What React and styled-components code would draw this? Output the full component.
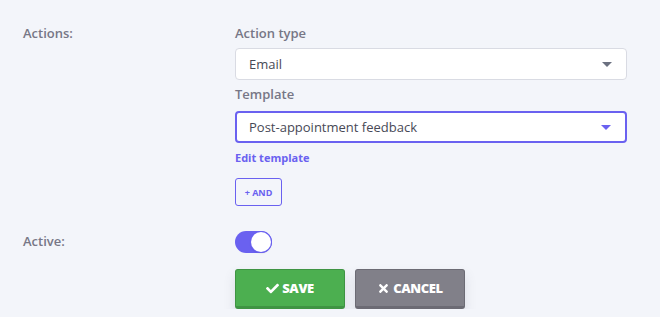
import React from "react";
import styled, { createGlobalStyle } from "styled-components";
import { FaCheck, FaTimes } from "react-icons/fa";

const GlobalStyle = createGlobalStyle`
  body {
    margin: 0;
    background: #f3f5fa;
    font-family: "Open Sans", "Noto Sans", sans-serif;
  }
`;

const Page = styled.div`
  display: grid;
  grid-template-columns: 212px 392px;
  padding: 24px 0 0 23px;
`;

const RowLabel = styled.div`
  font-size: 13px;
  font-weight: 600;
  color: #777786;
  line-height: 18px;
`;

const Fields = styled.div`
  display: flex;
  flex-direction: column;
  align-items: flex-start;
`;

const FieldLabel = styled.div`
  font-size: 13px;
  font-weight: 600;
  color: #777786;
  line-height: 18px;
  margin-bottom: ${(p) => p.$mb || 6}px;
`;

const Select = styled.div`
  box-sizing: border-box;
  width: 392px;
  height: 32px;
  display: flex;
  align-items: center;
  justify-content: space-between;
  padding: 0 14px 0 ${(p) => (p.$focused ? 12 : 13)}px;
  background: #fff;
  border: ${(p) => (p.$focused ? "2px solid #6a61f0" : "1px solid #d9dbe3")};
  border-radius: 4px;
  font-size: 13px;
  color: #474956;
  margin-bottom: ${(p) => p.$mb || 0}px;
`;

const Caret = styled.span`
  width: 0;
  height: 0;
  border-left: 5px solid transparent;
  border-right: 5px solid transparent;
  border-top: 5px solid ${(p) => p.$color};
`;

const EditLink = styled.a`
  font-size: 11px;
  font-weight: 700;
  color: #6a61f0;
  margin-top: 7px;
  line-height: 16px;
  text-decoration: none;
`;

const AndButton = styled.button`
  box-sizing: border-box;
  margin-top: 12px;
  width: 47px;
  height: 28px;
  border: 1px solid #6a61f0;
  border-radius: 3px;
  background: transparent;
  color: #6a61f0;
  font-family: inherit;
  font-size: 9px;
  font-weight: 700;
  padding: 0;
`;

const Spacer = styled.div`
  grid-column: 1 / -1;
  height: 26px;
`;

const Toggle = styled.div`
  box-sizing: border-box;
  width: 37px;
  height: 22px;
  margin-top: -1px;
  border-radius: 11px;
  background: #6a61f0;
  display: flex;
  justify-content: flex-end;
  align-items: center;
  padding: 1px;
`;

const Knob = styled.div`
  width: 20px;
  height: 20px;
  border-radius: 50%;
  background: #fff;
  box-shadow: 0 0 0 1px #6a61f0, 0 1px 2px rgba(0, 0, 0, 0.2);
`;

const Buttons = styled.div`
  grid-column: 2;
  display: flex;
  gap: 10px;
  margin-top: 16px;
`;

const ActionButton = styled.button`
  box-sizing: border-box;
  width: 110px;
  height: 40px;
  display: flex;
  align-items: center;
  justify-content: center;
  gap: 3px;
  background: ${(p) => p.$bg};
  border: 1px solid ${(p) => p.$edge};
  border-bottom-width: 3px;
  border-radius: 3px;
  color: #fff;
  font-family: inherit;
  font-size: 13px;
  font-weight: 800;
  letter-spacing: -0.4px;
  text-transform: uppercase;
  box-shadow: 0 6px 12px rgba(80, 80, 100, 0.15);
  padding: 0;
  svg {
    width: 13px;
    height: 13px;
  }
`;

export default function App() {
  return (
    <>
      <GlobalStyle />
      <Page>
        <RowLabel>Actions:</RowLabel>
        <Fields>
          <FieldLabel>Action type</FieldLabel>
          <Select $mb={5}>
            Email
            <Caret $color="#6b7080" />
          </Select>
          <FieldLabel $mb={8}>Template</FieldLabel>
          <Select $focused>
            Post-appointment feedback
            <Caret $color="#6a61f0" />
          </Select>
          <EditLink>Edit template</EditLink>
          <AndButton>+ AND</AndButton>
        </Fields>
        <Spacer />
        <RowLabel>Active:</RowLabel>
        <Fields>
          <Toggle>
            <Knob />
          </Toggle>
        </Fields>
        <Buttons>
          <ActionButton $bg="#4caf50" $edge="#3f9443">
            <FaCheck /> Save
          </ActionButton>
          <ActionButton $bg="#818089" $edge="#6c6b74">
            <FaTimes /> Cancel
          </ActionButton>
        </Buttons>
      </Page>
    </>
  );
}
